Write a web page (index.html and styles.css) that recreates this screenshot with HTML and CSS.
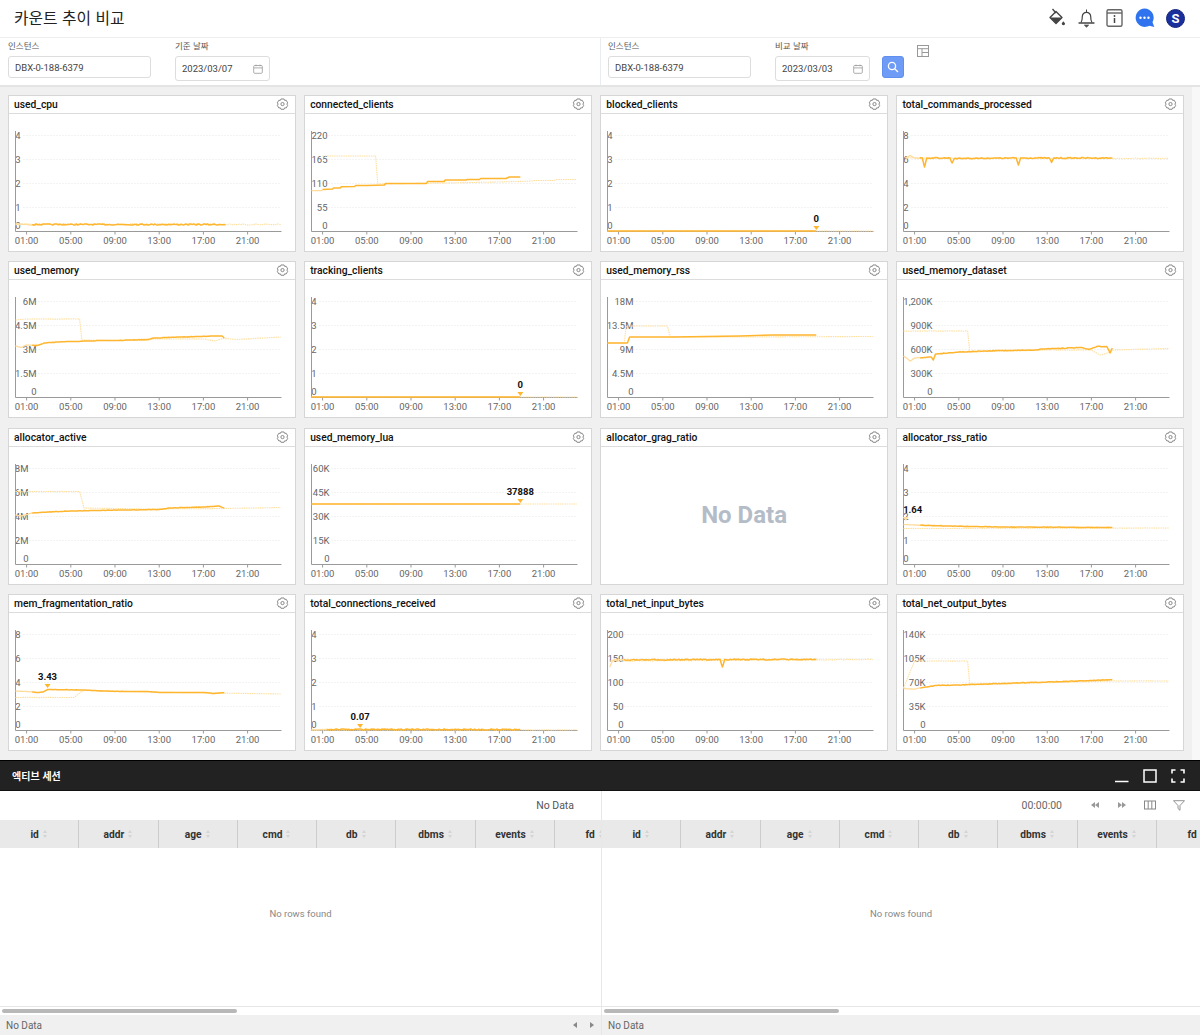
FILE: index.html
```html
<!DOCTYPE html>
<html lang="ko">
<head>
<meta charset="utf-8">
<title>카운트 추이 비교</title>
<link rel="stylesheet" href="styles.css">
</head>
<body>
<svg class="defs" width="0" height="0" aria-hidden="true">
  <symbol id="gear" viewBox="0 0 12 12"><path d="M4.600 .9h2.800l.6 1.300 1.400-.1 1.400 2.400-.8 1.100.8 1.200-1.400 2.400-1.400-.1-.6 1.300H4.600L4 9.100l-1.400.1L1.200 6.800 2 5.600l-.8-1.100 1.400-2.400 1.400.1z" fill="none" stroke="#777" stroke-width=".8" stroke-linejoin="round"/><circle cx="6" cy="5.600" r="1.500" fill="none" stroke="#777" stroke-width=".8"/></symbol>
  <symbol id="cal" viewBox="0 0 10 10"><rect x=".7" y="1.500" width="8.600" height="7.800" rx="1" fill="none" stroke="#999" stroke-width=".8"/><path d="M.7 3.900h8.600M3 .6v1.600M7 .6v1.600" stroke="#999" stroke-width=".8"/></symbol>
</svg>
<header class="topbar">
  <h1 class="title">카운트 추이 비교</h1>
  <div class="top-icons">
    <svg class="ti" width="17" height="20" viewBox="0 0 17 20"><path d="M7 3.500 13 9.500 7 15.500 1 9.500z" fill="none" stroke="#444" stroke-width="1.400" stroke-linejoin="round"/><path d="M1 9.500h12L7 15.500z" fill="#444"/><path d="M3.500 1 7 5" stroke="#444" stroke-width="1.300"/><path d="M14.300 13.300l1.800 2.200a1.700 1.700 0 1 1-3.400 0z" fill="#444"/></svg>
    <svg class="ti" width="17" height="20" viewBox="0 0 17 20"><path d="M3 14.500c1.300-1.700 1.300-3.500 1.300-6a4.200 4.200 0 0 1 8.400 0c0 2.500 0 4.300 1.300 6" fill="none" stroke="#444" stroke-width="1.200"/><path d="M1 15h15" stroke="#444" stroke-width="1.300" stroke-linecap="round"/><path d="M6.500 17.200h4L8.500 19zM8.500 1.500v2.500" fill="#444" stroke="#444"/></svg>
    <svg class="ti" width="17" height="20" viewBox="0 0 17 20"><rect x="1" y="1.700" width="15" height="16.500" rx="1.500" fill="none" stroke="#666" stroke-width="1.400"/><path d="M1 5h15" stroke="#666" stroke-width="1.400"/><path d="M8.500 10v5" stroke="#444" stroke-width="1.500"/><circle cx="8.500" cy="8" r=".9" fill="#444"/></svg>
    <svg class="ti" width="20" height="20" viewBox="0 0 20 20"><path d="M9.500 .5a9.200 9.200 0 0 1 8 13.700l1.800 4.800-4.900-1.300A9.200 9.200 0 1 1 9.500 .5z" fill="#2f74ee"/><circle cx="5.500" cy="9.700" r="1.200" fill="#fff"/><circle cx="9.500" cy="9.700" r="1.200" fill="#fff"/><circle cx="13.500" cy="9.700" r="1.200" fill="#fff"/></svg>
    <span class="avatar">S</span>
  </div>
</header>

<section class="filters">
  <div class="filter-side">
    <div class="field field-inst"><label class="flabel">인스턴스</label><div class="box box-inst">DBX-0-188-6379</div></div>
    <div class="field field-date"><label class="flabel">기준 날짜</label><div class="box box-date"><span>2023/03/07</span><svg class="cal" width="10" height="10"><use href="#cal"/></svg></div></div>
  </div>
  <div class="filter-side filter-right">
    <div class="field field-inst"><label class="flabel">인스턴스</label><div class="box box-inst">DBX-0-188-6379</div></div>
    <div class="field field-date"><label class="flabel">비교 날짜</label><div class="box box-date"><span>2023/03/03</span><svg class="cal" width="10" height="10"><use href="#cal"/></svg></div></div>
    <button class="search" type="button" aria-label="검색"><svg width="12" height="12" viewBox="0 0 12 12"><circle cx="5" cy="5" r="3.600" fill="none" stroke="#fff" stroke-width="1.300"/><path d="M7.700 7.700 11 11" stroke="#fff" stroke-width="1.300"/></svg></button>
    <svg class="layout-ico" width="12" height="12" viewBox="0 0 12 12"><rect x=".5" y=".5" width="11" height="11" fill="none" stroke="#999"/><path d="M.5 3.700h11M5 3.700v7.800M5 7.500h6.500" stroke="#999" fill="none"/></svg>
  </div>
</section>

<main class="board">
  <div class="grid">
    <article class="card"><div class="card-head"><h2>used_cpu</h2><svg class="gear"><use href="#gear"/></svg></div><svg class="plot" data-chart="used_cpu"></svg></article>
    <article class="card"><div class="card-head"><h2>connected_clients</h2><svg class="gear"><use href="#gear"/></svg></div><svg class="plot" data-chart="connected_clients"></svg></article>
    <article class="card"><div class="card-head"><h2>blocked_clients</h2><svg class="gear"><use href="#gear"/></svg></div><svg class="plot" data-chart="blocked_clients"></svg></article>
    <article class="card"><div class="card-head"><h2>total_commands_processed</h2><svg class="gear"><use href="#gear"/></svg></div><svg class="plot" data-chart="total_commands_processed"></svg></article>
    <article class="card"><div class="card-head"><h2>used_memory</h2><svg class="gear"><use href="#gear"/></svg></div><svg class="plot" data-chart="used_memory"></svg></article>
    <article class="card"><div class="card-head"><h2>tracking_clients</h2><svg class="gear"><use href="#gear"/></svg></div><svg class="plot" data-chart="tracking_clients"></svg></article>
    <article class="card"><div class="card-head"><h2>used_memory_rss</h2><svg class="gear"><use href="#gear"/></svg></div><svg class="plot" data-chart="used_memory_rss"></svg></article>
    <article class="card"><div class="card-head"><h2>used_memory_dataset</h2><svg class="gear"><use href="#gear"/></svg></div><svg class="plot" data-chart="used_memory_dataset"></svg></article>
    <article class="card"><div class="card-head"><h2>allocator_active</h2><svg class="gear"><use href="#gear"/></svg></div><svg class="plot" data-chart="allocator_active"></svg></article>
    <article class="card"><div class="card-head"><h2>used_memory_lua</h2><svg class="gear"><use href="#gear"/></svg></div><svg class="plot" data-chart="used_memory_lua"></svg></article>
    <article class="card"><div class="card-head"><h2>allocator_grag_ratio</h2><svg class="gear"><use href="#gear"/></svg></div><div class="nodata">No Data</div></article>
    <article class="card"><div class="card-head"><h2>allocator_rss_ratio</h2><svg class="gear"><use href="#gear"/></svg></div><svg class="plot" data-chart="allocator_rss_ratio"></svg></article>
    <article class="card"><div class="card-head"><h2>mem_fragmentation_ratio</h2><svg class="gear"><use href="#gear"/></svg></div><svg class="plot" data-chart="mem_fragmentation_ratio"></svg></article>
    <article class="card"><div class="card-head"><h2>total_connections_received</h2><svg class="gear"><use href="#gear"/></svg></div><svg class="plot" data-chart="total_connections_received"></svg></article>
    <article class="card"><div class="card-head"><h2>total_net_input_bytes</h2><svg class="gear"><use href="#gear"/></svg></div><svg class="plot" data-chart="total_net_input_bytes"></svg></article>
    <article class="card"><div class="card-head"><h2>total_net_output_bytes</h2><svg class="gear"><use href="#gear"/></svg></div><svg class="plot" data-chart="total_net_output_bytes"></svg></article>
  </div>
  <div class="vscroll"></div>
</main>

<section class="sessions">
  <div class="session-bar">
    <h2>엑티브 세션</h2>
    <div class="win-icons">
      <svg width="14" height="14" viewBox="0 0 14 14"><path d="M0 12.500h13.500" stroke="#fff" stroke-width="1.500"/></svg>
      <svg width="14" height="14" viewBox="0 0 14 14"><rect x="1" y="1" width="12" height="12" fill="none" stroke="#fff" stroke-width="1.500"/></svg>
      <svg width="14" height="14" viewBox="0 0 14 14"><path d="M1 4.500V1h3.500M9.500 1H13v3.500M13 9.500V13H9.500M4.500 13H1V9.500" fill="none" stroke="#fff" stroke-width="1.600"/></svg>
    </div>
  </div>
  <div class="panes">
    <div class="pane">
      <div class="pane-tools"><span class="tool-text">No Data</span></div>
      <div class="thead">
        <div class="th">id<i class="sort"></i></div><div class="th">addr<i class="sort"></i></div><div class="th">age<i class="sort"></i></div><div class="th">cmd<i class="sort"></i></div><div class="th">db<i class="sort"></i></div><div class="th">dbms<i class="sort"></i></div><div class="th">events<i class="sort"></i></div><div class="th">fd<i class="sort"></i></div>
      </div>
      <div class="tbody">No rows found</div>
      <div class="hscroll"><span class="thumb"></span></div>
      <div class="status"><span>No Data</span><span class="pager"><i class="tri tri-l"></i><i class="tri tri-r"></i></span></div>
    </div>
    <div class="pane pane-right">
      <div class="pane-tools pane-tools-right">
        <span class="tool-text tool-time">00:00:00</span>
        <svg class="tool" width="10" height="8" viewBox="0 0 10 8"><path d="M5 1v6L1 4zM9 1v6L5 4z" fill="#999"/></svg>
        <svg class="tool" width="10" height="8" viewBox="0 0 10 8"><path d="M1 1v6l4-3zM5 1v6l4-3z" fill="#999"/></svg>
        <svg class="tool" width="12" height="10" viewBox="0 0 12 10"><rect x=".5" y="1" width="11" height="8" fill="none" stroke="#888"/><path d="M4.200 1v8M7.800 1v8" stroke="#888"/></svg>
        <svg class="tool" width="12" height="11" viewBox="0 0 12 11"><path d="M.5.700h11L7 5.500v4.800L5 8.500v-3z" fill="none" stroke="#888" stroke-width=".9"/></svg>
      </div>
      <div class="thead">
        <div class="th">id<i class="sort"></i></div><div class="th">addr<i class="sort"></i></div><div class="th">age<i class="sort"></i></div><div class="th">cmd<i class="sort"></i></div><div class="th">db<i class="sort"></i></div><div class="th">dbms<i class="sort"></i></div><div class="th">events<i class="sort"></i></div><div class="th">fd<i class="sort"></i></div>
      </div>
      <div class="tbody">No rows found</div>
      <div class="hscroll"><span class="thumb"></span></div>
      <div class="status"><span>No Data</span></div>
    </div>
  </div>
</section>
<script src="charts.js"></script>
</body>
</html>
```
FILE: styles.css
```css
* { box-sizing: border-box; }
html, body { margin: 0; height: 100%; }
body {
  width: 1200px; height: 1035px; overflow: hidden;
  display: flex; flex-direction: column;
  font-family: Roboto, "Noto Sans CJK KR", "Liberation Sans", sans-serif;
  color: #333; background: #fff;
}
.defs { position: absolute; }

.topbar { height: 38px; flex: none; display: flex; align-items: center; justify-content: space-between; padding: 0 15px 1px 14px; border-bottom: 1px solid #eee; }
.title { margin: 0 0 2px; font: 400 15.800px "Noto Sans CJK KR", sans-serif; color: #222; }
.top-icons { display: flex; align-items: center; gap: 11.500px; }
.ti { display: block; }
.avatar { width: 19px; height: 19px; border-radius: 50%; background: #1a2f9c; border: 1px solid #14247c; color: #fff; font: 700 13px/17px Roboto, sans-serif; text-align: center; }

.filters { height: 49px; flex: none; display: flex; border-bottom: 2px solid #e4e4e4; }
.filter-side { width: 600px; display: flex; padding: 2px 0 0 8px; gap: 24px; }
.filter-right { padding-left: 7px; border-left: 1px solid #e8edf3; }
.field { display: flex; flex-direction: column; }
.field-inst { width: 143px; }
.field-date { width: 95px; }
.flabel { font: 400 8.500px/10px "Noto Sans CJK KR", sans-serif; color: #555; height: 16px; }
.box { border: 1px solid #ddd; border-radius: 3px; font-size: 9.500px; color: #444; display: flex; align-items: center; padding: 0 6px; }
.box-inst { height: 22px; }
.box-date { height: 25px; justify-content: space-between; padding-right: 6px; }
.cal { display: block; }
.search { width: 22px; height: 22px; margin: 16px 0 0 -12px; padding: 0; border: 1px solid #5f8fef; border-radius: 3px; background: #6e9bf5; display: flex; align-items: center; justify-content: center; }
.layout-ico { margin: 5px 0 0 -11px; }

.board { flex: 1; display: flex; background: #f0f0f0; min-height: 0; }
.grid { width: 1192px; padding: 8px 8px 9px; display: grid; grid-template-columns: repeat(4, 1fr); grid-template-rows: repeat(4, 1fr); gap: 9.250px 8.500px; }
.vscroll { width: 8px; background: #f8f8f8; }
.card { background: #fff; border: 1px solid #d6d6d6; display: flex; flex-direction: column; min-width: 0; min-height: 0; }
.card-head { height: 18px; flex: none; border-bottom: 1px solid #dcdcdc; display: flex; align-items: center; justify-content: space-between; padding: 0 6px 0 5px; }
.card-head h2 { margin: 0; font: 500 10.300px Roboto, sans-serif; color: #111; }
.gear { width: 13px; height: 13px; }
.plot { flex: 1; width: 100%; display: block; overflow: hidden; }
.nodata { flex: 1; display: flex; align-items: center; justify-content: center; font: 700 24px Roboto, sans-serif; color: #b4bcc8; }

.axis { stroke: #9a9a9a; stroke-width: 1; fill: none; }
.gridline { stroke: #e6e6e6; stroke-width: 1; stroke-dasharray: 1 2; fill: none; }
.ylab, .xlab { font: 400 9.500px Roboto, sans-serif; fill: #666; }
.ylab { text-anchor: end; }
.xlab { text-anchor: middle; }
.line-main { fill: none; stroke: #ffb52e; stroke-width: 1.500; stroke-linejoin: round; }
.line-lead { fill: none; stroke: #ffdc9c; stroke-width: 1.300; }
.line-cmp { fill: none; stroke: #ffdf9f; stroke-width: 1.100; stroke-dasharray: 1.500 .8; }
.mark { fill: #ffb52e; }
.mark-soft { fill: #ffdf9f; }
.mark-text { font: 700 9.500px Roboto, sans-serif; fill: #111; text-anchor: middle; }

.sessions { height: 275px; flex: none; display: flex; flex-direction: column; }
.session-bar { height: 31px; flex: none; background: #222; border-top: 1px solid #000; border-bottom: 1px solid #111; display: flex; align-items: center; justify-content: space-between; padding: 0 15px 0 12px; }
.session-bar h2 { margin: 0; font: 700 10px "Noto Sans CJK KR", sans-serif; color: #fff; }
.win-icons { display: flex; gap: 14px; }
.win-icons svg { display: block; }
.panes { flex: 1; display: flex; min-height: 0; }
.pane { width: 601px; min-width: 0; display: flex; flex-direction: column; overflow: hidden; }
.pane-right { width: 599px; border-left: 1px solid #e2e8f0; }
.pane-tools { height: 29px; flex: none; display: flex; align-items: center; justify-content: flex-end; padding: 0 27px 1px 0; }
.pane-tools-right { padding-right: 15px; gap: 17px; }
.tool-text { font-size: 10.500px; color: #555; }
.tool-time { margin-right: 11px; color: #666; }
.tool { display: block; }
.thead { height: 28px; flex: none; display: flex; background: #e9e9e9; }
.th { width: 79.300px; flex: none; display: flex; align-items: center; justify-content: center; gap: 3px; font: 700 10.200px Roboto, sans-serif; color: #333; border-right: 1px solid #ccc; }
.th:last-child { border-right: 0; }
.sort { width: 6px; height: 8px; display: flex; flex-direction: column; align-items: center; justify-content: space-between; }
.sort::before, .sort::after { content: ""; width: 0; height: 0; border-left: 2.500px solid transparent; border-right: 2.500px solid transparent; }
.sort::before { border-bottom: 3px solid #d4d4d4; }
.sort::after { border-top: 3px solid #d4d4d4; }
.tbody { flex: 1; display: flex; align-items: center; justify-content: center; padding-bottom: 28px; font-size: 9.500px; color: #888; }
.hscroll { height: 9px; flex: none; border-top: 1px solid #e6e6e6; padding: 2px 2px 0; }
.thumb { display: block; width: 235px; height: 4px; border-radius: 2px; background: #b8b8b8; }
.status { height: 20px; flex: none; background: #f0f0f0; display: flex; align-items: center; justify-content: space-between; padding: 0 6px; font-size: 10px; color: #666; }
.pager { display: flex; gap: 13px; margin-right: 1px; }
.tri { width: 0; height: 0; border-top: 3px solid transparent; border-bottom: 3px solid transparent; display: block; }
.tri-l { border-right: 4px solid #888; }
.tri-r { border-left: 4px solid #888; }
```
FILE: charts.js
```js
// Hourly series sketched from the dashboard, y values are given in page pixels of each row.
var ROW = [114, 280, 446, 612];
var HOUR = 11.05, X0 = 6.5;
var seed = 7;
function rnd() { seed = (seed * 16807) % 2147483647; return seed / 2147483647 - 0.5; }

var C = {
  used_cpu: { r: 0, ax: ['4','3','2','1','0'], w: 5,
    main: { k: [[0,224.5],[19,224.5]], n: 1.2 }, cmp: { k: [[0,224],[24,224.5]], n: 1.4 } },
  connected_clients: { r: 0, ax: ['220','165','110','55','0'], w: 16,
    main: { k: [[0,190.7],[.9,190.7],[1,189.5],[1.9,189],[2,188],[2.6,188],[2.7,186.7],[3.9,186.5],[4,185.5],[5,185.5],[6.6,185],[6.7,183.5],[10.4,183.5],[10.5,181.5],[12,181.5],[12.1,180],[14,180],[14.1,179.5],[15.2,179.5],[15.3,178.5],[17.6,178.5],[17.9,177],[18.9,177]] },
    cmp: { k: [[1,156],[5.8,156],[6,184],[12,183],[17,182],[20,181],[20.1,180.5],[22,180.5],[22.1,179.5],[24,179.5]] } },
  blocked_clients: { r: 0, ax: ['4','3','2','1','0'], w: 5, flat: 1,
    main: { k: [[0,231],[18.9,231]] }, cmp: { k: [[0,231],[24,231]] }, mark: [18.9, 231, '0'] },
  total_commands_processed: { r: 0, ax: ['8','6','4','2','0'], w: 5,
    main: { k: [[.2,158],[.6,155.5],[1,158],[1.7,158],[1.9,167],[2.1,158],[4.2,158],[4.4,163],[4.6,158.5],[10.2,158],[10.4,165],[10.6,158],[13.2,158],[13.4,162.5],[13.6,158],[18.9,158]], n: 1 },
    cmp: { k: [[.2,158],[24,158.5]], n: .8 } },
  used_memory: { r: 1, ax: ['6M','4.5M','3M','1.5M','0'], w: 21,
    main: { k: [[0,346],[.5,347.5],[1,345],[2,345.5],[2.6,343],[3,342.5],[5,341.5],[7,341],[7.5,340.5],[9,340.5],[12,339.5],[12.5,338],[15,337],[18,336],[18.7,336],[18.9,338]], n: .3 },
    cmp: { k: [[0,320],[1,319],[5.8,319],[6,340],[9,340.5],[12,340],[12.5,339],[17,339],[18,341],[18.8,338.5],[20,339.5],[24,337]], n: .3 } },
  tracking_clients: { r: 1, ax: ['4','3','2','1','0'], w: 5, flat: 1,
    main: { k: [[0,397],[18.9,397]] }, cmp: { k: [[0,397],[24,397]] }, mark: [18.9, 397, '0'] },
  used_memory_rss: { r: 1, ax: ['18M','13.5M','9M','4.5M','0'], w: 26,
    main: { k: [[0,343],[1.8,343],[2,337],[6,337],[9,336.5],[12,336],[15,335],[18.9,335]] },
    cmp: { k: [[0,343],[1.5,343],[1.7,326],[5.4,326],[5.7,337],[12,337],[24,336.5]] } },
  used_memory_dataset: { r: 1, ax: ['1,200K','900K','600K','300K','0'], w: 29,
    main: { k: [[0,356],[.6,361],[1,358],[2.5,357],[2.7,360],[2.9,354],[5,352],[9,350.5],[12,350],[12.5,349],[16,347.5],[16.8,349.5],[17.5,346.5],[18.4,346.5],[18.7,353],[18.9,348]], n: .6 },
    cmp: { k: [[0,331],[5.8,331],[6,352],[9,351],[13,350],[17,350],[17.8,355],[18.5,353],[19,350],[24,348.5]], n: .5 } },
  allocator_active: { r: 2, ax: ['8M','6M','4M','2M','0'], w: 13,
    main: { k: [[0,514],[.5,515],[1.5,512],[3,511],[5,510],[7,509.5],[13,508.5],[14,507],[17,506],[18.4,505],[18.9,507]], n: .3 },
    cmp: { k: [[0,490.5],[5.8,490.5],[6.2,507],[12,508],[19,507.5],[24,506.5]], n: .2 } },
  used_memory_lua: { r: 2, ax: ['60K','45K','30K','15K','0'], w: 18,
    main: { k: [[0,503],[18.9,503]] }, cmp: { k: [[0,503],[24,503]] }, mark: [18.9, 503, '37888'] },
  allocator_rss_ratio: { r: 2, ax: ['4','3','2','1','0'], w: 5,
    main: { k: [[0,523.5],[1,524],[4,525],[9,526],[18.9,526.5]], n: .4 }, cmp: { k: [[0,527.5],[24,527]], n: .2 }, mark: [.2, 521, '1.64', 7, 1] },
  mem_fragmentation_ratio: { r: 3, ax: ['8','6','4','2','0'], w: 5,
    main: { k: [[0,690],[1,690.5],[2,691.5],[2.5,691],[2.9,688.5],[6,689],[8,690],[10,690.5],[12,690.5],[13,691.5],[17,691.5],[18,692.5],[18.9,691.5]], n: .3 },
    cmp: { k: [[0,696.5],[5.3,696.5],[5.9,691],[6.2,689.5],[12,691],[24,693]], n: .2 }, mark: [2.9, 688, '3.43'] },
  total_connections_received: { r: 3, ax: ['4','3','2','1','0'], w: 5,
    main: { k: [[0,728.5],[18.9,728.5]], n: 1.1 }, cmp: { k: [[0,729],[24,729]], n: .5 }, mark: [4.4, 728, '0.07'] },
  total_net_input_bytes: { r: 3, ax: ['200','150','100','50','0'], w: 16,
    main: { k: [[.2,666],[.5,659],[10.2,658.5],[10.4,666],[10.6,658.5],[18.9,658.5]], n: 1 }, cmp: { k: [[.2,660],[24,658.5]], n: .7 } },
  total_net_output_bytes: { r: 3, ax: ['140K','105K','70K','35K','0'], w: 22,
    main: { k: [[0,687.5],[1,688],[2,686],[3,684.5],[5,684],[6,683.5],[9,682.5],[13,681],[17,679.5],[18.9,678.5]], n: .5 },
    cmp: { k: [[0,687],[1,660],[5.8,660],[6,684],[12,682],[19,680],[24,680]], n: .3 } }
};

function sample(s) {
  var out = [], k = s.k;
  if (!s.n) return k.map(function (p) { return [p[0], p[1]]; });
  for (var i = 0; i < k.length - 1; i++) {
    var a = k[i], b = k[i + 1], steps = Math.max(1, Math.round((b[0] - a[0]) * 8));
    for (var j = 0; j < steps; j++) {
      var t = j / steps;
      out.push([a[0] + (b[0] - a[0]) * t, a[1] + (b[1] - a[1]) * t + (j && rnd() * s.n)]);
    }
  }
  out.push(k[k.length - 1]);
  return out;
}
function pts(list, top) {
  return list.map(function (p) { return (X0 + p[0] * HOUR).toFixed(1) + ',' + (p[1] - top).toFixed(1); }).join(' ');
}
function draw(svg, c) {
  var top = ROW[c.r], h = '';
  [21, 45, 69, 93].forEach(function (y) { h += '<path class="gridline" d="M' + (X0 + 8) + ' ' + (y + .5) + 'H272.500"/>'; });
  [21, 45, 69, 93, 111].forEach(function (y, i) {
    h += '<text class="ylab" x="' + (X0 + c.w) + '" y="' + (y + 3.5) + '">' + c.ax[i] + '</text>';
  });
  h += '<path class="axis" d="M' + X0 + ' 17V117.500H272.500"/>';
  ['01:00', '05:00', '09:00', '13:00', '17:00', '21:00'].forEach(function (t, i) {
    var x = X0 + (1 + i * 4) * HOUR;
    h += '<path class="axis" d="M' + x.toFixed(1) + ' 117.500v3"/>';
    h += '<text class="xlab" x="' + x.toFixed(1) + '" y="130">' + t + '</text>';
  });
  h += '<polyline class="line-cmp" points="' + pts(sample(c.cmp), top) + '"/>';
  var m = sample(c.main);
  var lead = m.filter(function (p) { return p[0] <= 1.5; });
  var rest = m.filter(function (p) { return p[0] >= (lead.length ? lead[lead.length - 1][0] : 0); });
  if (lead.length > 1 && !c.flat) h += '<polyline class="line-lead" points="' + pts(lead, top) + '"/>';
  h += '<polyline class="line-main" points="' + pts(c.flat ? m : rest, top) + '"/>';
  if (c.mark) {
    var mx = X0 + c.mark[0] * HOUR, my = c.mark[1] - top, dx = c.mark[3] || 0;
    h += '<path class="' + (c.mark[4] ? 'mark-soft' : 'mark') + '" d="M' + (mx - 3) + ' ' + (my - 5) + 'h6l-3 4z"/>';
    h += '<text class="mark-text" x="' + (mx + dx).toFixed(1) + '" y="' + (my - 9) + '">' + c.mark[2] + '</text>';
  }
  svg.innerHTML = h;
}
document.querySelectorAll('.plot').forEach(function (svg) { draw(svg, C[svg.dataset.chart]); });
```
